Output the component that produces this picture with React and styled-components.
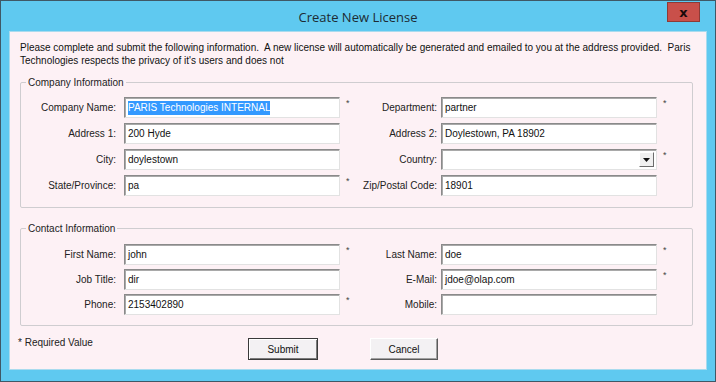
import React from "react";
import styled, { createGlobalStyle } from "styled-components";

const GlobalStyle = createGlobalStyle`
  body {
    margin: 0;
    background: #ffffff;
  }
`;

const Window = styled.div`
  width: 716px;
  height: 382px;
  box-sizing: border-box;
  border: 1px solid #3f5866;
  background: #5fc9f0;
  display: flex;
  flex-direction: column;
  font-family: "Liberation Sans", Arial, sans-serif;
  font-size: 10px;
  color: #111;
`;

const TitleBar = styled.div`
  height: 30px;
  flex: none;
  display: grid;
  grid-template-columns: 1fr auto 1fr;
  align-items: start;
`;

const Title = styled.div`
  grid-column: 2;
  padding-top: 7px;
  font-family: "Open Sans", "Noto Sans", sans-serif;
  font-size: 13px;
  color: #1d2b33;
`;

const CloseButton = styled.div`
  grid-column: 3;
  justify-self: end;
  margin: 1px 15px 0 0;
  width: 33px;
  height: 20px;
  box-sizing: border-box;
  border: 1px solid #8e3a36;
  background: #c9504a;
  display: flex;
  align-items: center;
  justify-content: center;
  font-family: "DejaVu Sans", sans-serif;
  font-weight: bold;
  font-size: 13px;
  color: #1a0a0a;
`;

const Panel = styled.div`
  flex: 1;
  margin: 0 8px 11px 8px;
  background: #fdf1f5;
  border: 1px solid #a9dbee;
  padding: 9px 13px 0 10px;
  display: flex;
  flex-direction: column;
`;

const Intro = styled.p`
  margin: 0;
  line-height: 13px;
  white-space: nowrap;
  color: #111;
`;

const Group = styled.fieldset`
  margin: ${({ $top }) => $top}px 0 0 0;
  padding: 0 0 ${({ $bottom }) => $bottom}px 0;
  border: 1px solid #cfcdd0;
  border-radius: 2px;
  min-width: 0;
`;

const Legend = styled.legend`
  margin-left: 5px;
  padding: 0 2px;
  line-height: 13px;
  color: #222;
`;

const FieldGrid = styled.div`
  display: grid;
  grid-template-columns: 103px 216px 14px 87px 216px 14px;
  row-gap: ${({ $gap }) => $gap}px;
  padding-top: ${({ $top }) => $top}px;
  align-items: start;
`;

const Label = styled.div`
  height: 21px;
  line-height: 21px;
  text-align: right;
  padding-right: ${({ $right }) => ($right ? 4 : 8)}px;
  white-space: nowrap;
  color: #222;
`;

const TextBox = styled.div`
  height: 21px;
  box-sizing: border-box;
  background: #ffffff;
  border: 1px solid;
  border-color: #8a8a8a #e2e2e2 #e2e2e2 #8a8a8a;
  box-shadow: inset 1px 1px 0 #a9a9a9;
  padding: 0 2px 0 3px;
  line-height: 18px;
  display: flex;
  align-items: center;
  white-space: nowrap;
  overflow: hidden;
  color: #111;
`;

const Selected = styled.span`
  background: #3399ff;
  color: #ffffff;
  line-height: 14px;
`;

const DropButton = styled.div`
  margin-left: auto;
  width: 15px;
  height: 15px;
  box-sizing: border-box;
  background: #f0f0f0;
  border: 1px solid;
  border-color: #ffffff #6c6c6c #6c6c6c #ffffff;
  display: flex;
  align-items: center;
  justify-content: center;
`;

const Star = styled.div`
  padding: 1px 0 0 6px;
  font-size: 9px;
  line-height: 10px;
  color: #444;
`;

const Footer = styled.div`
  margin-top: 11px;
  display: flex;
  align-items: flex-start;
`;

const Required = styled.div`
  width: 230px;
  margin-left: -2px;
  color: #222;
`;

const Button = styled.div`
  width: ${({ $w }) => $w}px;
  height: 22px;
  box-sizing: border-box;
  margin-top: 1px;
  margin-right: 52px;
  background: #f3f1f3;
  border: 1px solid;
  border-color: ${({ $default }) =>
    $default ? "#3a3a3a" : "#ffffff #5a5a5a #5a5a5a #ffffff"};
  box-shadow: ${({ $default }) =>
    $default
      ? "inset 1px 1px 0 #ffffff, inset -1px -1px 0 #7a7a7a"
      : "inset -1px -1px 0 #a0a0a0"};
  display: flex;
  align-items: center;
  justify-content: center;
  color: #111;
`;

const Arrow = () => (
  <svg width="7" height="4" viewBox="0 0 7 4">
    <path d="M0 0 H7 L3.5 4 Z" fill="#111" />
  </svg>
);

const Field = ({ label, value, required, right, select, selected }) => (
  <>
    <Label $right={right}>{label}</Label>
    <TextBox>
      {selected ? <Selected>{value}</Selected> : value}
      {select && (
        <DropButton>
          <Arrow />
        </DropButton>
      )}
    </TextBox>
    <Star>{required ? "*" : ""}</Star>
  </>
);

const App = () => (
  <>
    <GlobalStyle />
    <Window>
      <TitleBar>
        <Title>Create New License</Title>
        <CloseButton>x</CloseButton>
      </TitleBar>
      <Panel>
        <Intro>
          Please complete and submit the following information.&nbsp; A new license will
          automatically be generated and emailed to you at the address provided.&nbsp; Paris
          <br />
          Technologies respects the privacy of it's users and does not
        </Intro>

        <Group $top={9} $bottom={11}>
          <Legend>Company Information</Legend>
          <FieldGrid $top={8} $gap={5}>
            <Field label="Company Name:" value="PARIS Technologies INTERNAL" required selected />
            <Field label="Department:" value="partner" required right />
            <Field label="Address 1:" value="200 Hyde" />
            <Field label="Address 2:" value="Doylestown, PA 18902" right />
            <Field label="City:" value="doylestown" />
            <Field label="Country:" value="" required right select />
            <Field label="State/Province:" value="pa" required />
            <Field label="Zip/Postal Code:" value="18901" right />
          </FieldGrid>
        </Group>

        <Group $top={14} $bottom={10}>
          <Legend>Contact Information</Legend>
          <FieldGrid $top={9} $gap={4}>
            <Field label="First Name:" value="john" required />
            <Field label="Last Name:" value="doe" required right />
            <Field label="Job Title:" value="dir" />
            <Field label="E-Mail:" value="jdoe@olap.com" required right />
            <Field label="Phone:" value="2153402890" required />
            <Field label="Mobile:" value="" right />
          </FieldGrid>
        </Group>

        <Footer>
          <Required>* Required Value</Required>
          <Button $w={70} $default>
            Submit
          </Button>
          <Button $w={68}>Cancel</Button>
        </Footer>
      </Panel>
    </Window>
  </>
);

export default App;
